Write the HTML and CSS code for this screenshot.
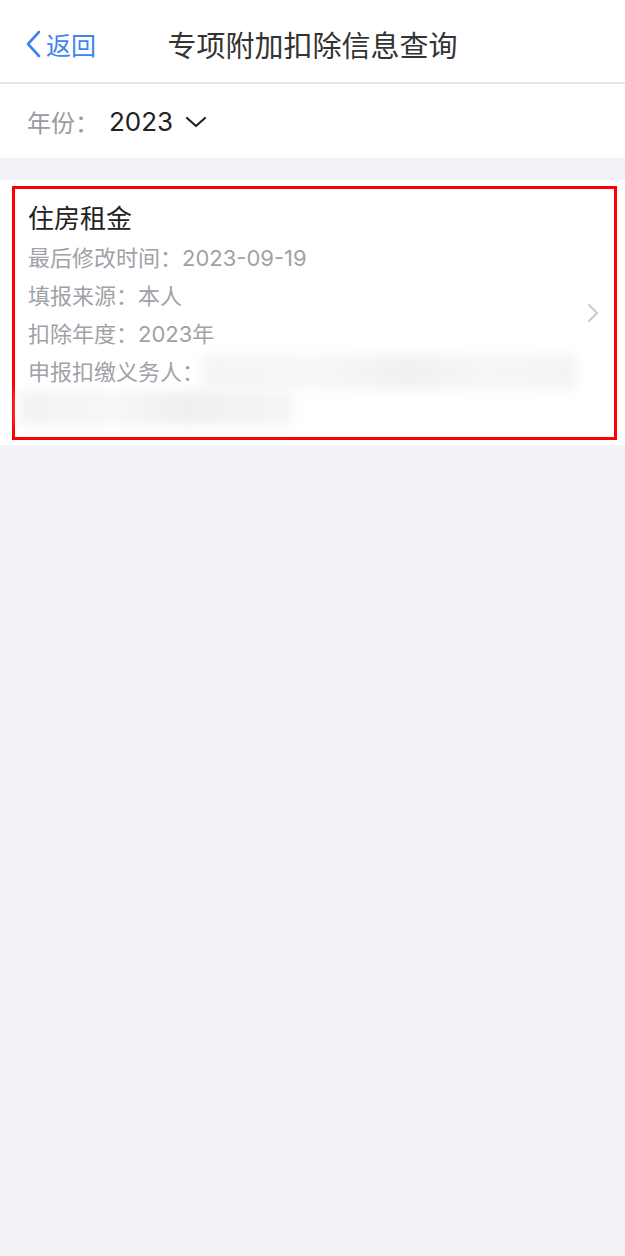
FILE: index.html
```html
<!DOCTYPE html>
<html lang="zh-CN">

<head>
    <meta charset="UTF-8">
    <meta name="viewport" content="width=device-width, initial-scale=1.0">
    <title>专项附加扣除信息查询</title>
    <link rel="stylesheet" href="styles.css">
</head>

<body>
    <div class="nav-bar">
        <a class="back-btn" href="#">
            <svg width="18" height="28" viewBox="0 0 18 28">
                <path d="M15 2 L4 14 L15 26" fill="none" stroke="#3d86f2" stroke-width="2.6" stroke-linecap="round" stroke-linejoin="round" />
            </svg>
            <span>返回</span>
        </a>
        <div class="nav-title">专项附加扣除信息查询</div>
        <div></div>
    </div>

    <div class="year-row">
        <span class="year-label">年份：</span>
        <span class="year-value">2023</span>
        <svg class="year-arrow" width="22" height="14" viewBox="0 0 22 14">
            <path d="M2 3 L11 11 L20 3" fill="none" stroke="#222" stroke-width="2.2" stroke-linecap="round" stroke-linejoin="round" />
        </svg>
    </div>

    <div class="card">
        <div class="card-inner">
            <div class="item-title">住房租金</div>
            <div class="item-line">最后修改时间：2023-09-19</div>
            <div class="item-line">填报来源：本人</div>
            <div class="item-line">扣除年度：2023年</div>
            <div class="item-line">申报扣缴义务人：<span class="blur blur-a"></span></div>
            <div class="blur blur-b"></div>

            <svg class="item-arrow" width="12" height="20" viewBox="0 0 12 20">
                <path d="M2 2 L10 10 L2 18" fill="none" stroke="#c9c9ce" stroke-width="2" stroke-linecap="round" stroke-linejoin="round" />
            </svg>
        </div>
    </div>
</body>

</html>
```

FILE: styles.css
```css
body {
    margin: 0;
    background-color: #f2f3f7;
    font-family: Inter, "Noto Sans CJK SC", sans-serif;
}

.nav-bar {
    height: 76px;
    padding-top: 6px;
    background-color: white;
    border-bottom: 2px solid #e3e4e8;
    display: grid;
    grid-template-columns: 1fr auto 1fr;
    align-items: center;
}

.back-btn {
    display: flex;
    align-items: center;
    padding-left: 24px;
    color: #3d86f2;
    text-decoration: none;
    font-size: 25px;
}

.back-btn span {
    margin-left: 4px;
}

.nav-title {
    font-size: 29px;
    color: #333;
}

.year-row {
    height: 74px;
    background-color: white;
    display: flex;
    align-items: center;
    padding-left: 27px;
}

.year-label {
    font-size: 24px;
    color: #9a9aa0;
}

.year-value {
    font-size: 26px;
    color: #222;
    margin-left: 10px;
}

.year-arrow {
    margin-left: 12px;
    margin-top: 2px;
}

.card {
    margin-top: 22px;
    background-color: white;
    padding: 6px 8px 5px 12px;
}

.card-inner {
    position: relative;
    border: 3px solid #ff0000;
    padding: 10px 13px 12px 13px;
}

.item-title {
    font-size: 26px;
    line-height: 40px;
    color: #222;
}

.item-line {
    font-size: 22px;
    line-height: 38px;
    color: #a1a1a8;
    display: flex;
    align-items: center;
}

.blur {
    display: block;
    filter: blur(6px);
    background: linear-gradient(90deg, #f4f4f5 0%, #f7f7f8 30%, #f0f0f2 55%, #f6f6f7 75%, #f3f3f4 100%);
}

.blur-a {
    width: 372px;
    height: 34px;
    margin-left: 0;
}

.blur-b {
    width: 272px;
    height: 34px;
    margin-left: -8px;
    background: linear-gradient(90deg, #f2f2f3 0%, #f7f7f8 35%, #efeff1 60%, #f5f5f6 100%);
}

.item-arrow {
    position: absolute;
    right: 15px;
    top: 114px;
}
```
